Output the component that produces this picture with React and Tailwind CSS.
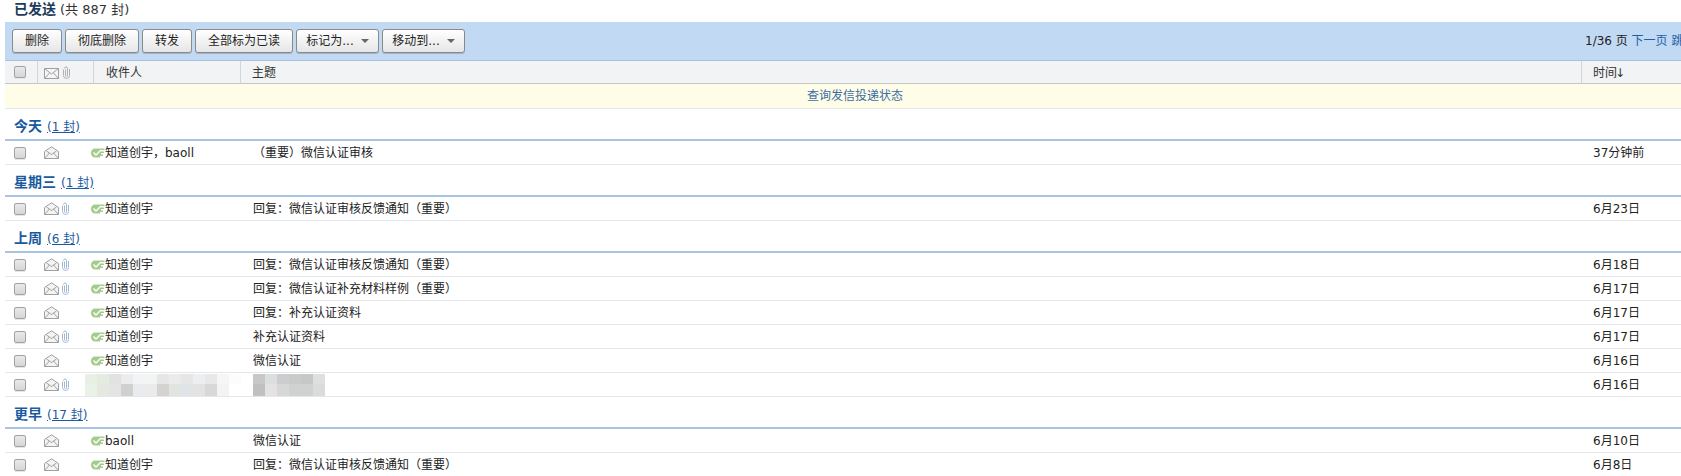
const FONT = "font-['DejaVu_Sans','Noto_Sans_CJK_SC',sans-serif]";

const groups = [
  {
    title: "今天",
    count: "(1 封)",
    rows: [{ to: "知道创宇，baoll", subject: "（重要）微信认证审核", time: "37分钟前" }],
  },
  {
    title: "星期三",
    count: "(1 封)",
    rows: [{ to: "知道创宇", subject: "回复：微信认证审核反馈通知（重要）", time: "6月23日", clip: true }],
  },
  {
    title: "上周",
    count: "(6 封)",
    rows: [
      { to: "知道创宇", subject: "回复：微信认证审核反馈通知（重要）", time: "6月18日", clip: true },
      { to: "知道创宇", subject: "回复：微信认证补充材料样例（重要）", time: "6月17日", clip: true },
      { to: "知道创宇", subject: "回复：补充认证资料", time: "6月17日" },
      { to: "知道创宇", subject: "补充认证资料", time: "6月17日", clip: true },
      { to: "知道创宇", subject: "微信认证", time: "6月16日" },
      { blurred: true, time: "6月16日", clip: true },
    ],
  },
  {
    title: "更早",
    count: "(17 封)",
    rows: [
      { to: "baoll", subject: "微信认证", time: "6月10日" },
      { to: "知道创宇", subject: "回复：微信认证审核反馈通知（重要）", time: "6月8日" },
    ],
  },
];

const mosaicName = [
  ["#e8f0e6", "#e4ebe0", "#e2e2e2", "#ececec", "#f3f4f5", "#f2f3f3", "#e6e6e6", "#eaeceb", "#e6e6e6", "#eceef0", "#e8e8e8", "#f5f6f7", "#fcfcfc"],
  ["#eaf2e8", "#e3e9df", "#e4e4e4", "#d0d0d0", "#e9ebee", "#ebebeb", "#d4d3d1", "#e0e5e0", "#e0e3e8", "#e4e2e2", "#d9d8d8", "#f3f3f3", "#ffffff"],
];
const mosaicSubject = [
  ["#c8c8c8", "#dcdfe0", "#cbcdcf", "#c8cbca", "#c6c8c8", "#dddfe0"],
  ["#c0c0c0", "#e4e2e2", "#d6d8d8", "#cfd2d0", "#cfd2d0", "#dadcdc"],
];

function Checkbox() {
  return (
    <span className="block w-[12px] h-[12px] rounded-[2px] border border-[#a3a3a3] bg-gradient-to-b from-[#e9e9e9] to-[#d6d6d6] shadow-[0_1px_0_#e8e8e8]" />
  );
}

function Envelope({ open }) {
  return (
    <svg width="15" height="13" viewBox="0 0 15 13" fill="none" stroke="#a0a0a0" strokeWidth="1">
      {open ? (
        <>
          <path d="M0.5 5.5 L7.5 0.8 L14.5 5.5 V12.5 H0.5 Z" fill="#f4f4f4" />
          <path d="M2.5 5 L7.5 8.5 L12.5 5 M0.5 12.5 L5.5 7 M14.5 12.5 L9.5 7" />
        </>
      ) : (
        <>
          <path d="M0.5 2.5 H14.5 V12.5 H0.5 Z" fill="#f5f5f5" />
          <path d="M0.5 2.5 L7.5 8 L14.5 2.5 M0.5 12.5 L5.5 7 M14.5 12.5 L9.5 7" />
        </>
      )}
    </svg>
  );
}

function Clip({ color = "#9dbbd8" }) {
  return (
    <svg width="7" height="13" viewBox="0 0 7 13" fill="none" stroke={color} strokeWidth="1">
      <path d="M2.5 3.5 V9.5 A1 1 0 0 0 4.5 9.5 V2.5 A1.5 1.5 0 0 0 1.5 2.5 M0.5 3.5 V9.5 A3 3 0 0 0 6.5 9.5 V3" />
    </svg>
  );
}

function Sent() {
  return (
    <svg width="14" height="10" viewBox="0 0 14 10" className="shrink-0">
      <path d="M4 0.5 H13.5 V2 H10 V3.5 H13 V5 H10 V6.5 H12 V8 H9 V9.5 H4 A4 4.5 0 0 1 4 0.5 Z" fill="#a3cd8f" />
      <path d="M2.5 4.5 L5 7 L10 2" fill="none" stroke="#ffffff" strokeWidth="1.4" />
    </svg>
  );
}

function Mosaic({ colors, className }) {
  return (
    <div className={`flex flex-col ${className}`}>
      {colors.map((line, i) => (
        <div key={i} className={`flex ${i === 0 ? "h-[10px]" : "h-[12px]"}`}>
          {line.map((c, j) => (
            <span key={j} className="w-[12px] h-full" style={{ background: c }} />
          ))}
        </div>
      ))}
    </div>
  );
}

function Btn({ children, w, menu }) {
  return (
    <button
      className={`${w} h-[24px] flex items-center justify-center gap-[7px] rounded-[3px] border border-[#8a8a8a] bg-gradient-to-b from-[#ffffff] to-[#e6e6e6] text-[12px] text-[#222] shadow-[0_1px_0_#9fb4cc]`}
    >
      {children}
      {menu && <span className="w-0 h-0 border-x-[4px] border-x-transparent border-t-[4px] border-t-[#666]" />}
    </button>
  );
}

function Row({ row }) {
  return (
    <div className="relative h-[24px] flex items-center border-b border-[#e3e6eb] text-[12px] text-[#222]">
      <div className="w-[39px] pl-[9px]">
        <Checkbox />
      </div>
      <div className="w-[47px] flex items-center gap-[3px]">
        <Envelope open />
        {row.clip && <Clip />}
      </div>
      {row.blurred ? (
        <>
          <Mosaic colors={mosaicName} className="absolute left-[80px] top-[1px]" />
          <Mosaic colors={mosaicSubject} className="absolute left-[248px] top-[1px]" />
        </>
      ) : (
        <>
          <div className="w-[162px] flex items-center whitespace-nowrap">
            <Sent />
            <span className="pt-[1px]">{row.to}</span>
          </div>
          <div className="whitespace-nowrap pt-[1px]">{row.subject}</div>
        </>
      )}
      <div className="absolute left-[1588px] pt-[1px] whitespace-nowrap">{row.time}</div>
    </div>
  );
}

export default function App() {
  return (
    <div className={`w-[1681px] h-[476px] overflow-hidden bg-white pl-[5px] ${FONT}`}>
      <div className="w-[1700px]">
        <div className="h-[22px] flex items-center gap-[4px] pl-[9px] pb-[3px] text-[13px] text-[#333]">
          <span className="text-[14px] font-bold text-[#1d3b5c]">已发送</span>
          <span>(共 887 封)</span>
        </div>

        <div className="h-[39px] flex items-center justify-between pl-[7px] pb-[1px] bg-[#c1d9f3] border-b border-[#a9c3df]">
          <div className="flex gap-[3px]">
            <Btn w="w-[50px]">删除</Btn>
            <Btn w="w-[74px]">彻底删除</Btn>
            <Btn w="w-[50px]">转发</Btn>
            <Btn w="w-[98px]">全部标为已读</Btn>
            <Btn w="w-[83px]" menu>标记为...</Btn>
            <Btn w="w-[83px]" menu>移动到...</Btn>
          </div>
          <div className="w-[120px] whitespace-nowrap text-[12px] text-[#222]">
            1/36 页 <span className="text-[#1f5fa5]">下一页 跳转到</span>
          </div>
        </div>

        <div className="h-[23px] flex items-center bg-[#f1f3f5] border-b border-[#c4c8cd] text-[12px] text-[#333]">
          <div className="w-[33px] h-full flex items-center pl-[9px] border-r border-[#d3d6da]">
            <Checkbox />
          </div>
          <div className="w-[56px] h-full flex items-center gap-[4px] pl-[6px] border-r border-[#d3d6da]">
            <Envelope />
            <Clip color="#b0b0b0" />
          </div>
          <div className="w-[147px] h-full flex items-center pl-[12px] pt-[1px] border-r border-[#d3d6da]">收件人</div>
          <div className="w-[1341px] h-full flex items-center pl-[11px] pt-[1px] border-r border-[#d3d6da]">主题</div>
          <div className="pl-[11px] pt-[1px] whitespace-nowrap">
            时间<span className="-ml-[2px]">↓</span>
          </div>
        </div>

        <div className="h-[25px] flex items-center justify-center bg-[#fffde8] border-b border-[#e3e6eb] text-[12px] text-[#3a6ea5]">
          查询发信投递状态
        </div>

        {groups.map((g) => (
          <div key={g.title}>
            <div className="h-[32px] flex items-center gap-[5px] pl-[9px] pt-[5px] border-b-2 border-[#a9c4e2]">
              <span className="text-[14px] font-bold text-[#1a5a9e]">{g.title}</span>
              <span className="text-[12px] text-[#1a5a9e] underline">{g.count}</span>
            </div>
            {g.rows.map((row, i) => (
              <Row key={i} row={row} />
            ))}
          </div>
        ))}
      </div>
    </div>
  );
}
